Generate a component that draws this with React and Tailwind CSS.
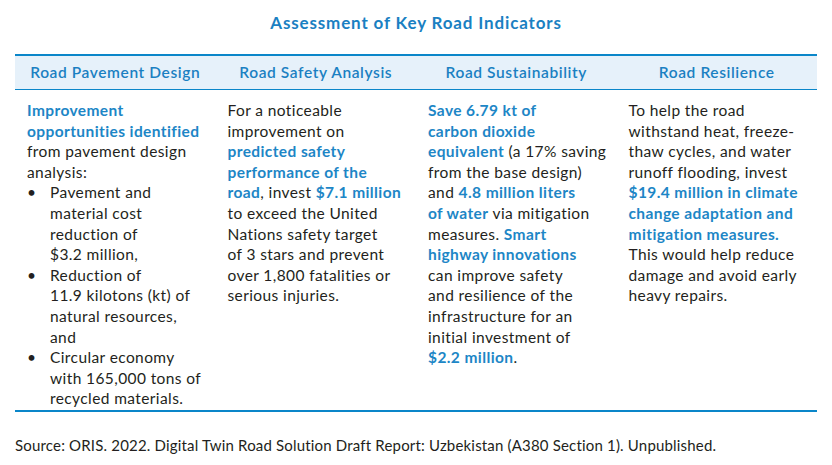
export default function App() {
  const blue = "font-bold text-[#1d86c6]";

  return (
    <div className="w-[832px] h-[465px] bg-white font-['Lato',sans-serif] text-[#231f20]">
      <div className="pt-[12px] text-center text-[17px] tracking-[0.85px] font-bold text-[#1a80c2] leading-[22px]">
        Assessment of Key Road Indicators
      </div>

      <div className="mx-[15px] mt-[20px] border-t-2 border-b-2 border-[#0a86c9]">
        {/* header row */}
        <div className="grid grid-cols-4 h-[34px] bg-[#e6f1fa] border-b border-[#0a86c9] text-[15.5px] tracking-[0.6px] font-semibold text-[#1a80c2]">
          <div className="flex items-center justify-center">Road Pavement Design</div>
          <div className="flex items-center justify-center">Road Safety Analysis</div>
          <div className="flex items-center justify-center">Road Sustainability</div>
          <div className="flex items-center justify-center">Road Resilience</div>
        </div>

        {/* body row */}
        <div className="grid grid-cols-4 pt-[10px] pb-[1px] text-[15.5px] tracking-[0.4px] leading-[20.6px] whitespace-nowrap">
          <div className="px-[12px]">
            <span className={blue}>Improvement<br />opportunities identified</span>
            <br />from pavement design
            <br />analysis:
            <ul className="list-none">
              <li className="flex">
                <span className="w-[23px] pl-[0px] shrink-0">•</span>
                <span>Pavement and<br />material cost<br />reduction of<br />$3.2 million,</span>
              </li>
              <li className="flex">
                <span className="w-[23px] pl-[0px] shrink-0">•</span>
                <span>Reduction of<br />11.9 kilotons (kt) of<br />natural resources,<br />and</span>
              </li>
              <li className="flex">
                <span className="w-[23px] pl-[0px] shrink-0">•</span>
                <span>Circular economy<br />with 165,000 tons of<br />recycled materials.</span>
              </li>
            </ul>
          </div>

          <div className="px-[12px]">
            For a noticeable
            <br />improvement on
            <br /><span className={blue}>predicted safety</span>
            <br /><span className={blue}>performance of the</span>
            <br /><span className={blue}>road</span>, invest <span className={blue}>$7.1 million</span>
            <br />to exceed the United
            <br />Nations safety target
            <br />of 3 stars and prevent
            <br />over 1,800 fatalities or
            <br />serious injuries.
          </div>

          <div className="px-[12px]">
            <span className={blue}>Save 6.79 kt of</span>
            <br /><span className={blue}>carbon dioxide</span>
            <br /><span className={blue}>equivalent</span> (a 17% saving
            <br />from the base design)
            <br />and <span className={blue}>4.8 million liters</span>
            <br /><span className={blue}>of water</span> via mitigation
            <br />measures. <span className={blue}>Smart</span>
            <br /><span className={blue}>highway innovations</span>
            <br />can improve safety
            <br />and resilience of the
            <br />infrastructure for an
            <br />initial investment of
            <br /><span className={blue}>$2.2 million</span>.
          </div>

          <div className="px-[12px]">
            To help the road
            <br />withstand heat, freeze-
            <br />thaw cycles, and water
            <br />runoff flooding, invest
            <br /><span className={blue}>$19.4 million in climate</span>
            <br /><span className={blue}>change adaptation and</span>
            <br /><span className={blue}>mitigation measures.</span>
            <br />This would help reduce
            <br />damage and avoid early
            <br />heavy repairs.
          </div>
        </div>
      </div>

      <div className="mx-[15px] mt-[23px] text-[15px] tracking-[0.18px] leading-[20px]">
        Source: ORIS. 2022. Digital Twin Road Solution Draft Report: Uzbekistan (A380 Section 1). Unpublished.
      </div>
    </div>
  );
}
